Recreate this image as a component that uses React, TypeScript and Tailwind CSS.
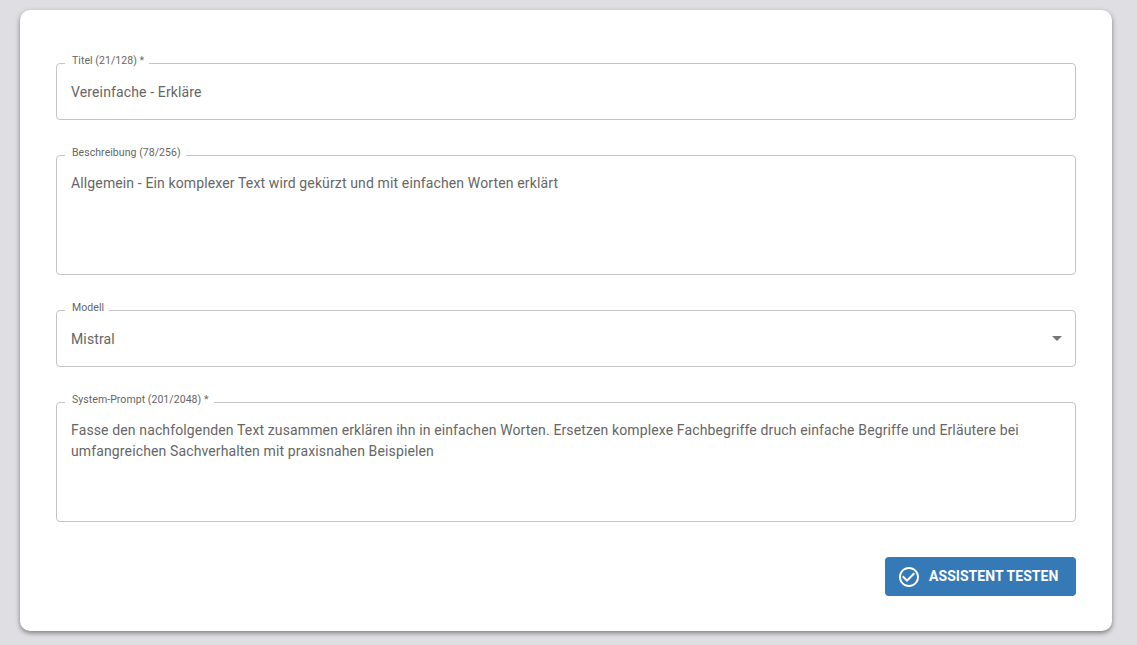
const FIELDS = [
  { label: "Titel (21/128) *", value: "Vereinfache - Erkläre", tall: false },
  {
    label: "Beschreibung (78/256)",
    value: "Allgemein - Ein komplexer Text wird gekürzt und mit einfachen Worten erklärt",
    tall: true,
  },
  { label: "Modell", value: "Mistral", tall: false, select: true },
  {
    label: "System-Prompt (201/2048) *",
    value:
      "Fasse den nachfolgenden Text zusammen erklären ihn in einfachen Worten. Ersetzen komplexe Fachbegriffe druch einfache Begriffe und Erläutere bei umfangreichen Sachverhalten mit praxisnahen Beispielen",
    tall: true,
  },
]

function Field({ label, value, tall, select }: { label: string; value: string; tall: boolean; select?: boolean }) {
  return (
    <div
      className={`relative rounded border border-[#c4c4c4] px-[14px] ${
        tall ? "h-[120px] pt-[17px]" : "flex h-[57px] items-center pt-[2px]"
      }`}
    >
      <span className="absolute left-[8px] top-[-9px] bg-white pl-[7px] pr-[5px] text-[10.5px] leading-[12px] tracking-[0.06px] text-[#666666]">
        {label}
      </span>
      <p className="text-[14px] leading-[21px] tracking-[0.13px] text-[#666666]">{value}</p>
      {select && (
        <svg viewBox="0 0 24 24" className="absolute right-[6px] top-[15px] h-6 w-6 fill-[#757575]">
          <path d="M7 10l5 5 5-5z" />
        </svg>
      )}
    </div>
  )
}

export default function App() {
  return (
    <div className="h-[645px] overflow-hidden bg-[#dfdfe3] px-[20px] pr-[25px] pt-[10px] font-['Roboto',sans-serif]">
      <div className="flex h-[621px] flex-col gap-[35px] rounded-[10px] bg-white px-[36px] pt-[53px] shadow-[0_2px_5px_rgba(0,0,0,0.45)]">
        {FIELDS.map((f) => (
          <Field key={f.label} {...f} />
        ))}
        <div className="flex justify-end">
          <button className="flex h-[39px] w-[191px] items-center rounded bg-[#3579b6] pl-[12px] text-[14px] font-bold uppercase tracking-[0.05px] text-white">
            <svg viewBox="0 0 24 24" className="mr-[8px] h-[24px] w-[24px] fill-white">
              <path d="M16.59 7.58 10 14.17l-3.59-3.58L5 12l5 5 8-8zM12 2C6.48 2 2 6.48 2 12s4.48 10 10 10 10-4.48 10-10S17.52 2 12 2zm0 18c-4.42 0-8-3.58-8-8s3.58-8 8-8 8 3.58 8 8-3.58 8-8 8z" />
            </svg>
            Assistent testen
          </button>
        </div>
      </div>
    </div>
  )
}
